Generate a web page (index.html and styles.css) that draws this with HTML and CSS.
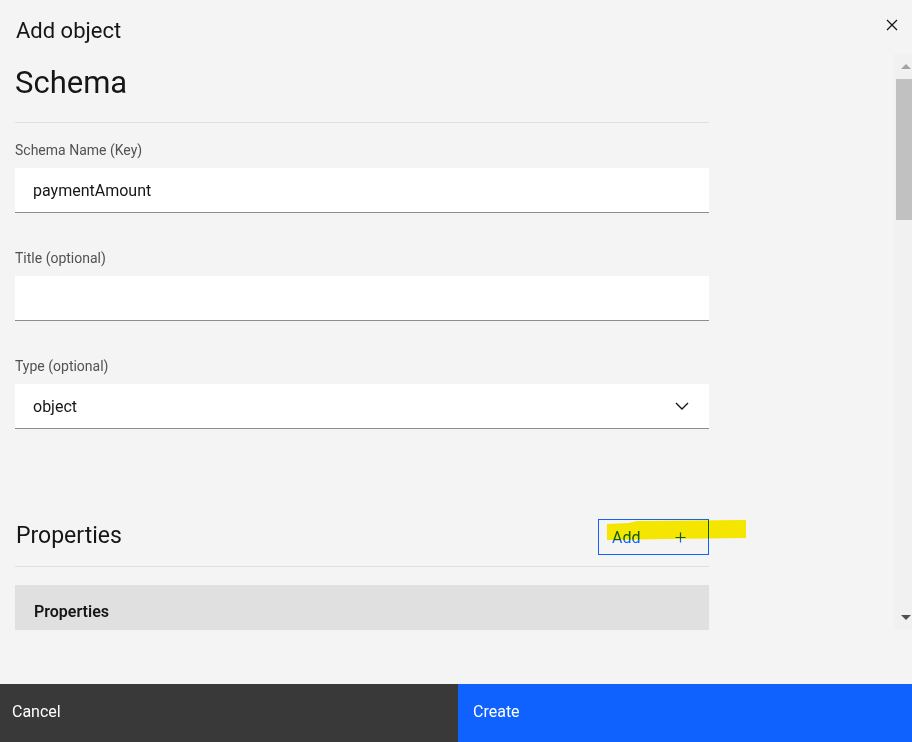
FILE: index.html
```html
<!DOCTYPE html>
<html lang="en">
<head>
<meta charset="utf-8">
<title>Add object</title>
<link rel="stylesheet" href="styles.css">
</head>
<body>
<div class="modal">
  <header class="modal-header">
    <h1 class="modal-title">Add object</h1>
    <button class="close-btn" aria-label="Close">
      <svg width="12" height="12" viewBox="0 0 12 12"><path d="M1 1 L11 11 M11 1 L1 11" stroke="#161616" stroke-width="1.3" fill="none"/></svg>
    </button>
  </header>
  <div class="modal-body">
    <div class="content">
      <div class="inner">
        <h2 class="section-title">Schema</h2>
        <hr class="divider first">
        <div class="field">
          <label class="label">Schema Name (Key)</label>
          <div class="input"><span class="value">paymentAmount</span></div>
        </div>
        <div class="field">
          <label class="label">Title (optional)</label>
          <div class="input"></div>
        </div>
        <div class="field">
          <label class="label">Type (optional)</label>
          <div class="input select"><span class="value">object</span>
            <svg class="chevron" width="14" height="8" viewBox="0 0 14 8"><path d="M1 1 L7 7 L13 1" stroke="#161616" stroke-width="1.4" fill="none"/></svg>
          </div>
        </div>
        <div class="props-row">
          <h3 class="props-title">Properties</h3>
          <button class="add-btn"><span>Add</span>
            <svg width="11" height="11" viewBox="0 0 11 11"><path d="M5.5 0.5 V10.5 M0.5 5.5 H10.5" stroke="#0f62fe" stroke-width="1.2" fill="none"/></svg>
          </button>
          <svg class="highlight" width="140" height="22" viewBox="0 0 140 22"><polygon points="0,4 22,3 30,1 139,0 139,18 60,19 0,20" fill="#fff100"/></svg>
        </div>
        <hr class="divider">
        <div class="table-head">Properties</div>
      </div>
    </div>
    <div class="scrollbar">
      <div class="sb-btn"><span class="arrow-up"></span></div>
      <div class="sb-thumb"></div>
      <div class="sb-fill"></div>
      <div class="sb-btn"><span class="arrow-down"></span></div>
    </div>
  </div>
  <div class="spacer"></div>
  <footer class="modal-footer">
    <button class="btn btn-secondary">Cancel</button>
    <button class="btn btn-primary">Create</button>
  </footer>
</div>
</body>
</html>
```
FILE: styles.css
```css
* { box-sizing: border-box; }
html, body { margin: 0; padding: 0; }
body {
  background: #f4f4f4;
  font-family: Roboto, "Liberation Sans", Arial, sans-serif;
  color: #161616;
}
.modal {
  width: 912px;
  height: 742px;
  display: flex;
  flex-direction: column;
  overflow: hidden;
}
.modal-header {
  height: 54px;
  flex: none;
  display: flex;
  align-items: flex-start;
  justify-content: space-between;
  padding: 17px 14px 0 16px;
}
.modal-title {
  margin: 0;
  font-size: 22px;
  font-weight: 400;
  line-height: 28px;
}
.close-btn {
  border: 0;
  background: transparent;
  padding: 0;
  width: 12px;
  height: 12px;
  margin-top: 2px;
  display: flex;
}
.modal-body {
  height: 576px;
  flex: none;
  display: flex;
}
.content {
  flex: 1;
  overflow: hidden;
  padding-left: 15px;
}
.inner { width: 694px; }
.section-title {
  margin: 0;
  padding-top: 9px;
  font-size: 31px;
  font-weight: 400;
  line-height: 40px;
}
.divider {
  margin: 0;
  border: 0;
  height: 1px;
  background: #e0e0e0;
}
.divider.first { margin-top: 19px; }
.field {
  display: flex;
  flex-direction: column;
  gap: 10px;
  margin-top: 19px;
}
.field + .field { margin-top: 37px; }
.label {
  font-size: 14px;
  line-height: 16px;
  color: #525252;
}
.input {
  height: 45px;
  background: #fff;
  border-bottom: 1px solid #8d8d8d;
  display: flex;
  align-items: center;
  padding: 1px 18px 0;
  font-size: 16px;
  color: #161616;
}
.select { justify-content: space-between; padding-right: 20px; }
.chevron { margin-bottom: 1px; }
.props-row {
  position: relative;
  margin-top: 90px;
  height: 36px;
  display: flex;
  align-items: center;
  justify-content: space-between;
}
.props-title {
  margin: 0;
  font-size: 23px;
  font-weight: 400;
  line-height: 28px;
  padding-left: 1px;
  padding-bottom: 3px;
}
.add-btn {
  width: 111px;
  height: 36px;
  border: 1px solid #0f62fe;
  background: transparent;
  display: flex;
  align-items: center;
  justify-content: space-between;
  padding: 0 22px 0 13px;
  font-family: inherit;
  font-size: 16px;
  color: #0f62fe;
}
.add-btn span { padding-top: 1px; }
.highlight {
  position: absolute;
  left: 592px;
  top: 1px;
  mix-blend-mode: multiply;
}
.divider + .table-head { margin-top: 18px; }
.props-row + .divider { margin-top: 11px; }
.table-head {
  height: 52px;
  background: #e0e0e0;
  display: flex;
  align-items: center;
  padding-left: 19px;
  font-size: 16px;
  font-weight: 600;
  color: #161616;
}
.scrollbar {
  width: 18px;
  flex: none;
  background: #f1f1f1;
  display: flex;
  flex-direction: column;
}
.sb-btn {
  height: 25px;
  display: flex;
  align-items: center;
  justify-content: center;
  padding-left: 6px;
}
.arrow-up {
  width: 0; height: 0;
  border-left: 5px solid transparent;
  border-right: 5px solid transparent;
  border-bottom: 5px solid #a3a3a3;
}
.arrow-down {
  width: 0; height: 0;
  border-left: 5px solid transparent;
  border-right: 5px solid transparent;
  border-top: 5px solid #505050;
}
.sb-thumb {
  height: 141px;
  margin-left: 2px;
  background: #c1c1c1;
}
.sb-fill { flex: 1; }
.spacer { flex: 1; }
.modal-footer {
  height: 58px;
  flex: none;
  display: grid;
  grid-template-columns: 458px 1fr;
}
.btn {
  border: 0;
  margin: 0;
  font-family: inherit;
  font-size: 16px;
  color: #fff;
  text-align: left;
  display: flex;
  align-items: flex-start;
  padding-top: 18px;
}
.btn-secondary { background: #393939; padding-left: 12px; }
.btn-primary { background: #0f62fe; padding-left: 15px; }
```
